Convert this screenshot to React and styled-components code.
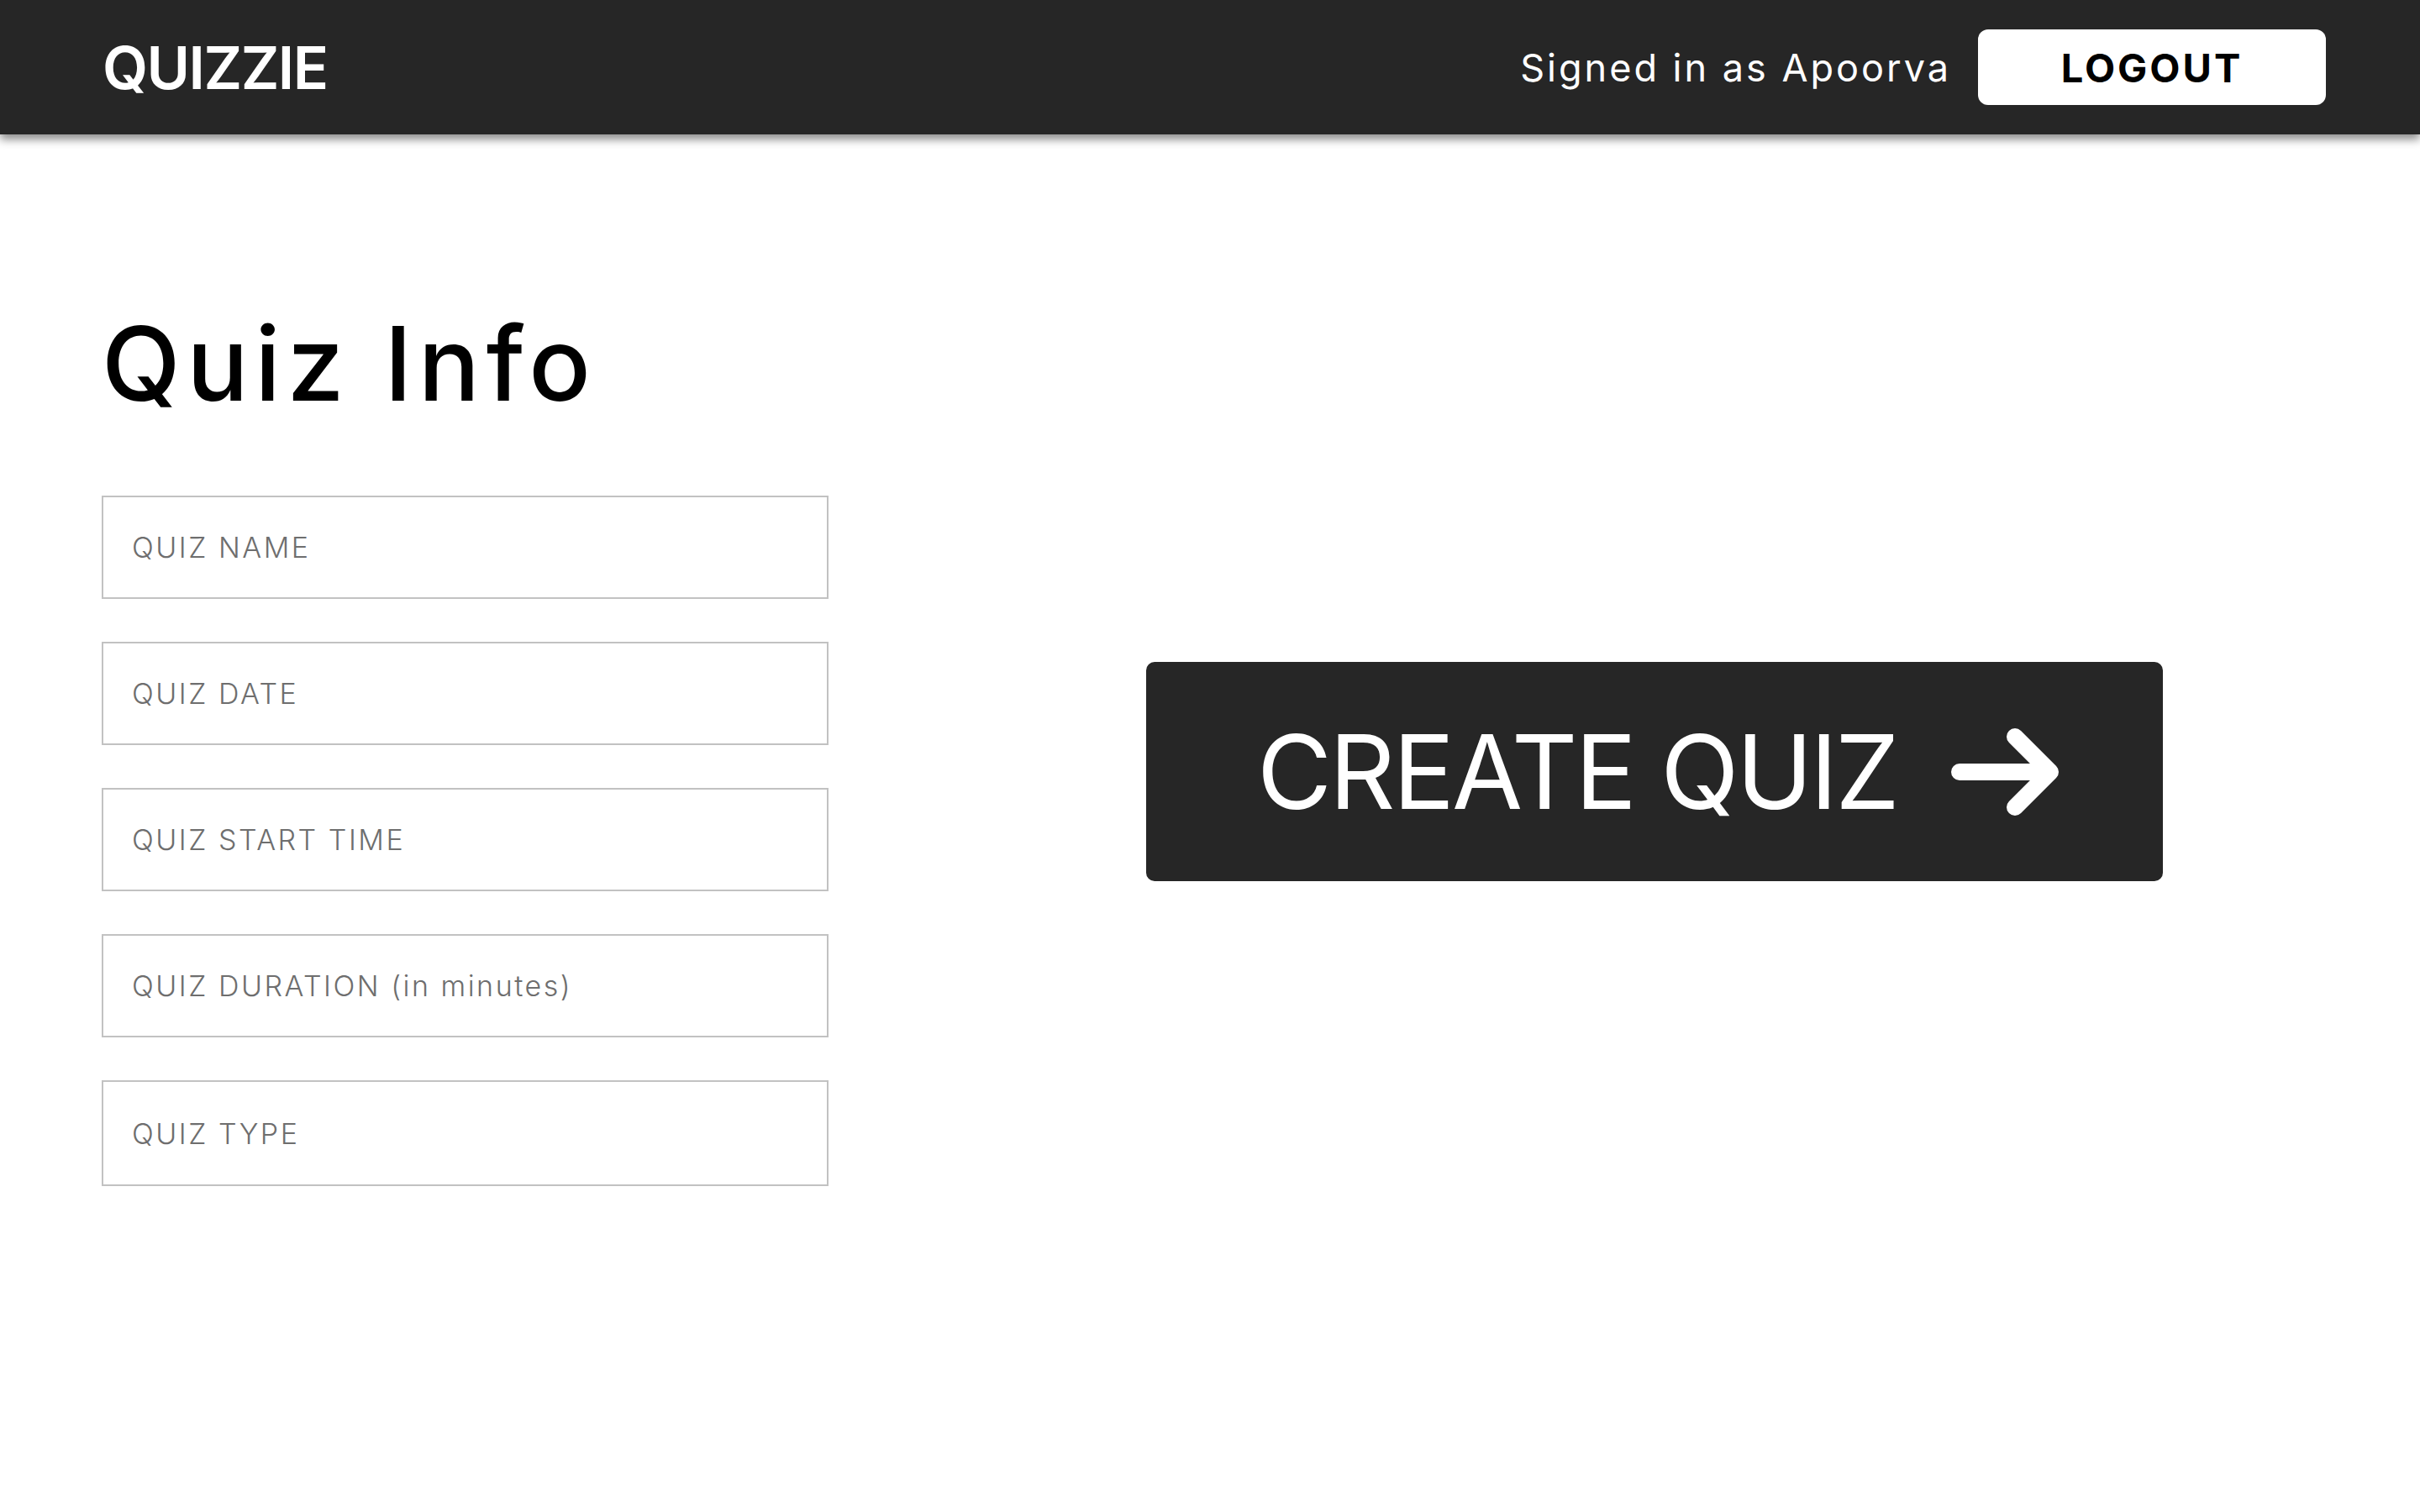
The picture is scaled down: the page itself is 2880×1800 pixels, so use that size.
import styled, { createGlobalStyle } from 'styled-components'

const GlobalStyle = createGlobalStyle`
    html, body {
        margin: 0;
        padding: 0;
        background: #ffffff;
        font-family: Inter, "Open Sans", sans-serif;
    }
    * { box-sizing: border-box; }
`

const fields = [
    { name: 'name', label: 'QUIZ NAME' },
    { name: 'date', label: 'QUIZ DATE' },
    { name: 'start', label: 'QUIZ START TIME' },
    { name: 'duration', label: 'QUIZ DURATION (in minutes)' },
    { name: 'type', label: 'QUIZ TYPE', tall: true },
]

function ArrowIcon(){
    return <svg width="130" height="106" viewBox="0 0 130 106" fill="none">
        <path d="M10 53 H118 M76 11 L118 53 L76 95" stroke="#ffffff" strokeWidth="20" strokeLinecap="round" strokeLinejoin="round"/>
    </svg>
}

export default function App(){
    return <Page>
        <GlobalStyle/>
        <NavBar>
            <Logo>QUIZZIE</Logo>
            <NavRight>
                <SignedIn>Signed in as Apoorva</SignedIn>
                <LogoutButton>LOGOUT</LogoutButton>
            </NavRight>
        </NavBar>
        <Main>
            <InfoColumn>
                <Title>Quiz Info</Title>
                <Form>
                    {fields.map(f => <Field key={f.name} tall={f.tall} placeholder={f.label}/>)}
                </Form>
            </InfoColumn>
            <ActionColumn>
                <CreateButton>
                    <span>CREATE QUIZ</span>
                    <ArrowIcon/>
                </CreateButton>
            </ActionColumn>
        </Main>
    </Page>
}

const Page = styled.div`
    min-height: 1800px;
    background: #ffffff;
`

const NavBar = styled.header`
    height: 160px;
    background-color: #262626;
    padding: 0 112px 0 122px;
    display: flex;
    align-items: center;
    justify-content: space-between;
    box-shadow: 0 6px 10px rgba(0, 0, 0, 0.45);
`

const Logo = styled.div`
    color: #ffffff;
    font-size: 70px;
    font-weight: 600;
    letter-spacing: -1.5px;
`

const NavRight = styled.div`
    display: flex;
    align-items: center;
    gap: 32px;
`

const SignedIn = styled.span`
    color: #ffffff;
    font-size: 45px;
    font-weight: 400;
    letter-spacing: 3px;
`

const LogoutButton = styled.button`
    width: 414px;
    height: 90px;
    background: #ffffff;
    color: #000000;
    border: none;
    border-radius: 12px;
    font-family: Inter, sans-serif;
    font-size: 47px;
    font-weight: 700;
    letter-spacing: 3px;
    cursor: pointer;
`

const Main = styled.main`
    display: flex;
    padding: 212px 121px 0 121px;
`

const InfoColumn = styled.section`
    width: 865px;
    display: flex;
    flex-direction: column;
`

const Title = styled.h1`
    margin: 0 0 96px 0;
    font-size: 122px;
    line-height: 1;
    font-weight: 500;
    letter-spacing: 7.5px;
    color: #000000;
`

const Form = styled.div`
    display: flex;
    flex-direction: column;
    gap: 51px;
`

const Field = styled.input`
    width: 100%;
    height: ${p => p.tall ? '126px' : '123px'};
    border: 2px solid #c2c2c2;
    padding: 0 34px;
    font-family: Inter, sans-serif;
    font-size: 34px;
    font-weight: 300;
    letter-spacing: 2.5px;
    color: #333;
    outline: none;
    &::placeholder {
        color: #6e6e6e;
    }
`

const ActionColumn = styled.section`
    padding: 416px 0 0 378px;
`

const CreateButton = styled.button`
    width: 1210px;
    height: 261px;
    background: #262626;
    border: none;
    border-radius: 10px;
    display: flex;
    align-items: center;
    justify-content: flex-start;
    padding-left: 132px;
    gap: 64px;
    color: #ffffff;
    font-family: Inter, sans-serif;
    font-size: 122px;
    font-weight: 400;
    cursor: pointer;
    span {
        letter-spacing: -3px;
    }
`
